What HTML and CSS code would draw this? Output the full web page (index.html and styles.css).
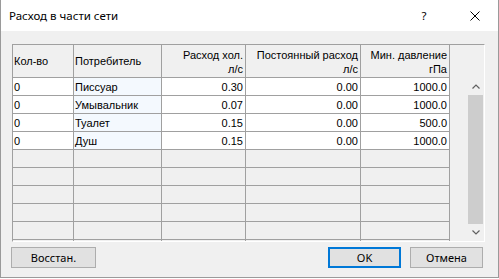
FILE: index.html
```html
<!DOCTYPE html>
<html lang="ru">
<head>
    <meta charset="UTF-8">
    <title>Расход в части сети</title>
    <link rel="stylesheet" href="styles.css">
</head>
<body>
    <div class="window">
        <div class="titlebar">
            <span class="title">Расход в части сети</span>
            <span class="help">?</span>
            <span class="close">
                <svg width="10" height="10" viewBox="0 0 10 10">
                    <path d="M0.5 0.5 L9.5 9.5 M9.5 0.5 L0.5 9.5" stroke="#000" stroke-width="1" fill="none"/>
                </svg>
            </span>
        </div>

        <div class="client">
            <div class="grid">
                <div class="grid-head">
                    <div class="row head-row">
                        <div class="cell">Кол-во</div>
                        <div class="cell">Потребитель</div>
                        <div class="cell right">Расход хол.<br>л/с</div>
                        <div class="cell right">Постоянный расход<br>л/с</div>
                        <div class="cell right">Мин. давление<br>гПа</div>
                    </div>
                    <div class="head-spare"></div>
                </div>

                <div class="grid-body">
                    <div class="rows">
                        <div class="row data">
                            <div class="cell">0</div>
                            <div class="cell name">Писсуар</div>
                            <div class="cell right">0.30</div>
                            <div class="cell right">0.00</div>
                            <div class="cell right">1000.0</div>
                        </div>
                        <div class="row data">
                            <div class="cell">0</div>
                            <div class="cell name">Умывальник</div>
                            <div class="cell right">0.07</div>
                            <div class="cell right">0.00</div>
                            <div class="cell right">1000.0</div>
                        </div>
                        <div class="row data">
                            <div class="cell">0</div>
                            <div class="cell name">Туалет</div>
                            <div class="cell right">0.15</div>
                            <div class="cell right">0.00</div>
                            <div class="cell right">500.0</div>
                        </div>
                        <div class="row data">
                            <div class="cell">0</div>
                            <div class="cell name">Душ</div>
                            <div class="cell right">0.15</div>
                            <div class="cell right">0.00</div>
                            <div class="cell right">1000.0</div>
                        </div>
                        <div class="row empty"><div class="cell"></div><div class="cell"></div><div class="cell"></div><div class="cell"></div><div class="cell"></div></div>
                        <div class="row empty"><div class="cell"></div><div class="cell"></div><div class="cell"></div><div class="cell"></div><div class="cell"></div></div>
                        <div class="row empty"><div class="cell"></div><div class="cell"></div><div class="cell"></div><div class="cell"></div><div class="cell"></div></div>
                        <div class="row empty"><div class="cell"></div><div class="cell"></div><div class="cell"></div><div class="cell"></div><div class="cell"></div></div>
                        <div class="row empty"><div class="cell"></div><div class="cell"></div><div class="cell"></div><div class="cell"></div><div class="cell"></div></div>
                        <div class="row empty"><div class="cell"></div><div class="cell"></div><div class="cell"></div><div class="cell"></div><div class="cell"></div></div>
                    </div>
                    <div class="gap"></div>
                    <div class="scrollbar">
                        <div class="arrow">
                            <svg width="8" height="5" viewBox="0 0 8 5"><path d="M0.5 4.5 L4 1 L7.5 4.5" stroke="#606060" stroke-width="1.2" fill="none"/></svg>
                        </div>
                        <div class="thumb"></div>
                        <div class="arrow">
                            <svg width="8" height="5" viewBox="0 0 8 5"><path d="M0.5 0.5 L4 4 L7.5 0.5" stroke="#606060" stroke-width="1.2" fill="none"/></svg>
                        </div>
                    </div>
                </div>
            </div>

            <div class="buttons">
                <button class="btn restore">Восстан.</button>
                <div class="btn-group">
                    <button class="btn default">OK</button>
                    <button class="btn">Отмена</button>
                </div>
            </div>
        </div>
    </div>
</body>
</html>
```

FILE: styles.css
```css
body{
    margin: 0;
    background-color: #ffffff;
}
.window{
    width: 499px;
    height: 278px;
    box-sizing: border-box;
    border-left: 1px solid #9a9a9a;
    border-right: 1px solid #9a9a9a;
    border-bottom: 1px solid #9a9a9a;
    background-color: #f0f0f0;
    font-family: "Noto Sans", sans-serif;
    font-size: 11px;
    color: #000;
    display: flex;
    flex-direction: column;
}
.titlebar{
    height: 31px;
    background-color: #ffffff;
    display: flex;
    align-items: center;
    padding-left: 8px;
    font-size: 11.5px;
}
.title{
    flex: 1;
}
.help{
    width: 44px;
    margin-right: 6px;
    text-align: center;
}
.close{
    width: 46px;
    display: flex;
    justify-content: center;
}
.client{
    flex: 1;
    padding: 13px 0 0 10px;
}
.grid{
    width: 473px;
    height: 198px;
    box-sizing: border-box;
    margin-left: 1px;
    border-left: 1px solid #a0a0a0;
    border-top: 1px solid #a0a0a0;
    border-right: 1px solid #ffffff;
    border-bottom: 1px solid #ffffff;
    font-family: "Liberation Sans", Arial, sans-serif;
    font-size: 11px;
    display: flex;
    flex-direction: column;
}
.grid-head{
    display: flex;
    height: 33px;
}
.row{
    display: grid;
    grid-template-columns: 61px 88px 84px 115px 89px;
}
.cell{
    box-sizing: border-box;
    border-right: 1px solid #a0a0a0;
    border-bottom: 1px solid #a0a0a0;
    padding: 0 2px 0 1px;
    white-space: nowrap;
    overflow: hidden;
}
.right{
    text-align: right;
}
.head-row .cell{
    height: 33px;
    line-height: 14px;
    display: flex;
    flex-direction: column;
    justify-content: center;
}
.head-row .cell.right{
    display: block;
    padding-top: 3px;
}
.head-spare{
    flex: 1;
}
.grid-body{
    flex: 1;
    display: flex;
    overflow: hidden;
}
.rows{
    width: 437px;
}
.row.data .cell,
.row.empty .cell{
    height: 18px;
    line-height: 17px;
    padding-top: 1px;
}
.row.data .cell{
    background-color: #ffffff;
    line-height: 16px;
}
.row.data .cell.name{
    background-color: #f4f9fe;
}
.gap{
    width: 17px;
}
.scrollbar{
    width: 17px;
    display: flex;
    flex-direction: column;
}
.arrow{
    height: 17px;
    display: flex;
    align-items: center;
    justify-content: center;
}
.thumb{
    flex: 1;
    margin: 0 1px;
    background-color: #cdcdcd;
}
.buttons{
    width: 472px;
    margin-top: 5px;
    display: flex;
    justify-content: space-between;
}
.btn-group{
    display: flex;
    gap: 9px;
}
.btn{
    width: 73px;
    height: 21px;
    box-sizing: border-box;
    border: 1px solid #adadad;
    background-color: #e1e1e1;
    font-family: "Noto Sans", sans-serif;
    font-size: 11px;
    padding: 0;
    color: #000;
}
.btn.restore{
    width: 85px;
}
.btn.default{
    border: 2px solid #0078d7;
}
```
